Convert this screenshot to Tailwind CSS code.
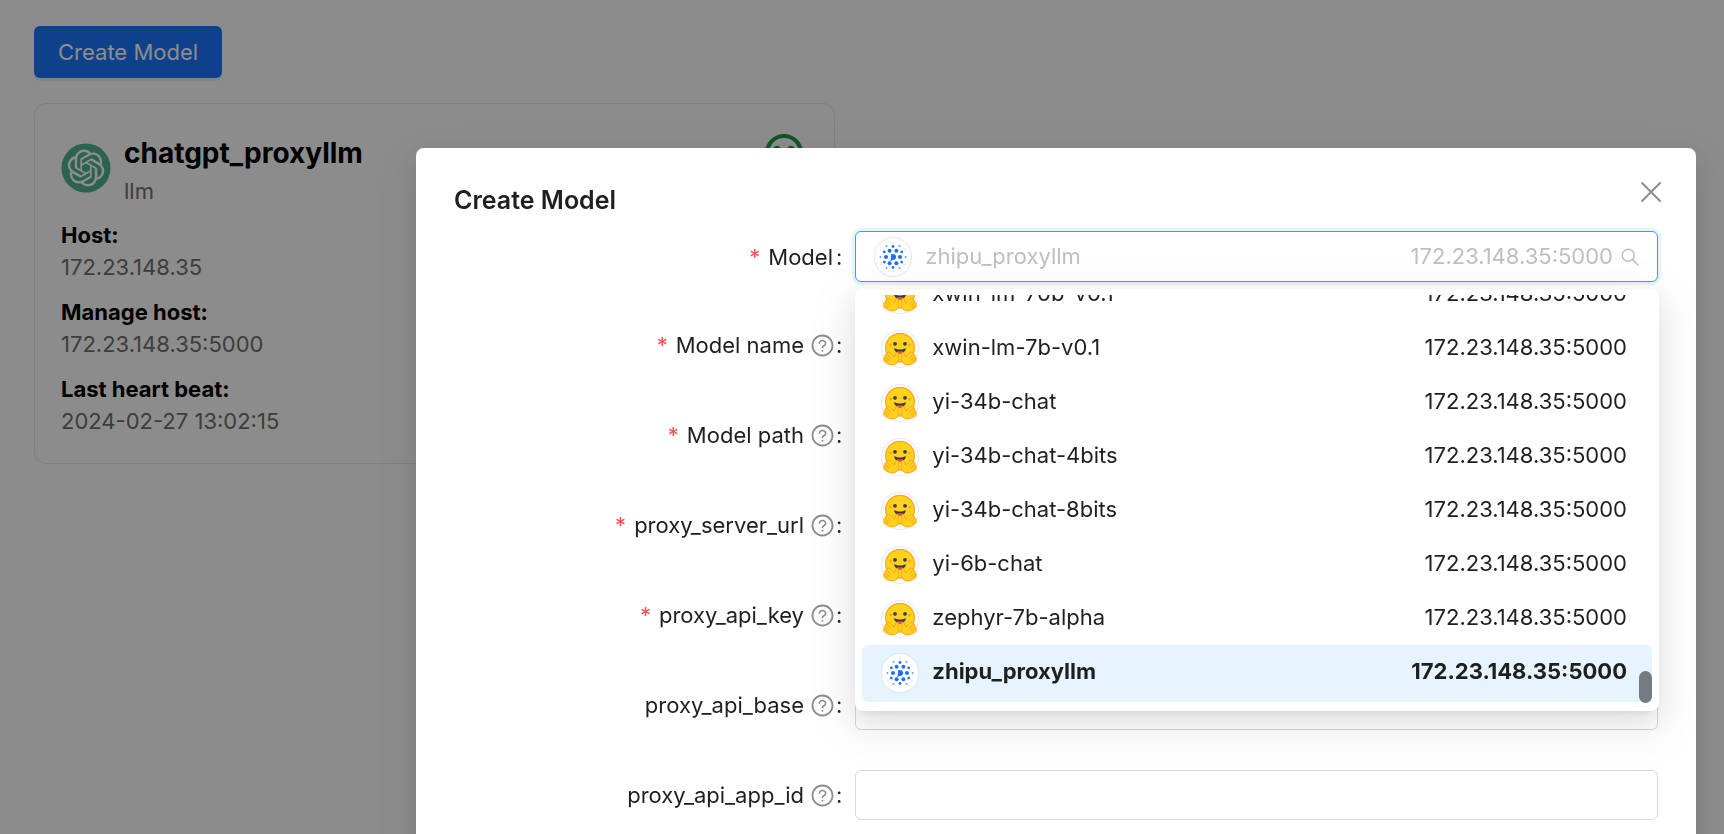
<!DOCTYPE html>
<html lang="en">
<head>
<meta charset="utf-8">
<meta name="viewport" content="width=device-width, initial-scale=1">
<title>Create Model</title>
<script src="https://cdn.jsdelivr.net/npm/@tailwindcss/browser@4"></script>
</head>
<body class="min-h-screen bg-white font-[Inter,'Liberation_Sans',sans-serif] text-[22px] leading-8 text-[#1f1f1f]">

<svg class="hidden" aria-hidden="true">
  <symbol id="hug" viewBox="0 0 36 36">
    <circle cx="18" cy="16.700" r="14.400" fill="#ffd21e" stroke="#ffa41b" stroke-width="1.200"/>
    <circle cx="8.400" cy="14" r="1.200" fill="#ffa41b"/><circle cx="27.600" cy="14" r="1.200" fill="#ffa41b"/>
    <circle cx="13" cy="12.800" r="1.900" fill="#3a3b45"/><circle cx="23" cy="12.800" r="1.900" fill="#3a3b45"/>
    <path d="M12.800 17.200c1.600.9 3.200 1.400 5.200 1.400s3.700-.5 5.200-1.400c.7 0 .6 1.200.2 2.100-.9 2-3 3.200-5.400 3.200s-4.500-1.200-5.400-3.200c-.4-.9-.5-2.100.2-2.100z" fill="#3a3b45"/>
    <path d="M14.300 21.200c.8-1.300 2.600-1.100 3.700-.6 1.100-.5 2.900-.7 3.700.6-1 .9-2.300 1.300-3.700 1.300s-2.700-.4-3.700-1.300z" fill="#ef4e4e"/>
    <g id="hand" fill="#ffd21e" stroke="#ffa41b" stroke-width="1" stroke-linejoin="round">
      <path d="M6.800 21.300c-1.200-.5-2.300.5-2 1.900-1.400-.2-2.300 1.100-1.700 2.400-1.200.1-1.700 1.500-1 2.500-.9.700-.7 2 .3 2.600 2.600 2 6.400 3.500 9.400 3 2.900-.4 4.600-2.500 4.700-5.100.1-1.400-.8-2.400-.3-4 .4-1.500.1-3-1-3.100-1.200-.1-1.900 1-2.200 2.500l-.6 1.800c-1.200-.4-2.200-1.300-3.100-2.500-.9-1.200-1.700-1.800-2.500-2z"/>
      <path d="M4.800 23.200l4.400 4.500M3.100 25.600l4.600 3.800M2.100 28.100l4.200 2.600" fill="none"/>
    </g>
    <use href="#hand" transform="matrix(-1 0 0 1 36 0)"/>
  </symbol>
  <symbol id="zhipu" viewBox="0 0 36 36">
    <g fill="#1f70ff">
      <path d="M16.200 15l3.200.3c2.400 1.200 2.400 4.200 0 5.400l-1.800.2-2.400 1.300.7-2.800z"/>
      <circle cx="14.600" cy="11.800" r="2"/><circle cx="21.400" cy="11.800" r="2"/>
      <circle cx="11" cy="18" r="2.100"/><circle cx="25" cy="18" r="2.100"/>
      <circle cx="14.600" cy="24.200" r="2"/><circle cx="21.400" cy="24.200" r="2"/>
      <circle cx="18" cy="7.500" r="1.400"/><circle cx="18" cy="28.500" r="1.400"/>
      <circle cx="9.300" cy="12.900" r="1.400"/><circle cx="26.700" cy="12.900" r="1.400"/>
      <circle cx="9.300" cy="23.100" r="1.400"/><circle cx="26.700" cy="23.100" r="1.400"/>
      <g opacity=".7"><circle cx="11.500" cy="7" r="1"/><circle cx="24.500" cy="7" r="1"/><circle cx="5.400" cy="18" r="1"/><circle cx="30.600" cy="18" r="1"/><circle cx="11.500" cy="29" r="1"/><circle cx="24.500" cy="29" r="1"/></g>
      <g opacity=".3"><circle cx="18" cy="3.800" r=".7"/><circle cx="18" cy="32.200" r=".7"/><circle cx="6" cy="10.800" r=".7"/><circle cx="30" cy="10.800" r=".7"/><circle cx="6" cy="25.200" r=".7"/><circle cx="30" cy="25.200" r=".7"/></g>
    </g>
  </symbol>
  <symbol id="help" viewBox="0 0 1024 1024">
    <path d="M512 64C264.600 64 64 264.600 64 512s200.600 448 448 448 448-200.600 448-448S759.400 64 512 64zm0 820c-205.400 0-372-166.600-372-372s166.600-372 372-372 372 166.600 372 372-166.600 372-372 372z"/>
    <path d="M623.600 316.700C593.600 290.400 554 276 512 276s-81.600 14.500-111.600 40.700C369.200 344 352 380.700 352 420v7.600c0 4.400 3.600 8 8 8h48c4.400 0 8-3.600 8-8V420c0-44.100 43.100-80 96-80s96 35.900 96 80c0 31.100-22 59.600-56.100 72.700-21.200 8.100-39.200 22.300-52.100 40.900-13.100 19-19.900 41.800-19.900 64.900V620c0 4.400 3.600 8 8 8h48c4.400 0 8-3.600 8-8v-22.700a48.300 48.300 0 0130.900-44.800c59-22.700 97.100-74.700 97.100-132.500.1-39.300-17.100-76-48.300-103.300zM472 732a40 40 0 1080 0 40 40 0 10-80 0z"/>
  </symbol>
</svg>

<main class="px-[34px] pt-[26px]">
  <button type="button" class="block h-[52px] rounded-md bg-[#1d76ff] px-6 text-white shadow-[0_3px_0_rgba(5,145,255,0.1)]">Create Model</button>

  <article class="mt-[25px] max-w-[801px] rounded-xl border border-gray-200 px-[26px] pt-[26px] pb-[26px] text-[#707070]">
    <header class="flex items-start">
      <svg class="mt-[13px] size-[50px] shrink-0" viewBox="0 0 50 50" role="img" aria-label="OpenAI">
        <circle cx="25" cy="25" r="24.500" fill="#51b292"/>
        <g transform="translate(6.600 6.600) scale(1.533)" fill="#fff">
          <path d="M22.282 9.821a5.985 5.985 0 0 0-.516-4.910 6.046 6.046 0 0 0-6.510-2.900A6.065 6.065 0 0 0 4.981 4.180a5.985 5.985 0 0 0-3.998 2.900 6.046 6.046 0 0 0 .743 7.097 5.980 5.980 0 0 0 .510 4.911 6.051 6.051 0 0 0 6.515 2.900A5.985 5.985 0 0 0 13.260 24a6.056 6.056 0 0 0 5.772-4.206 5.990 5.990 0 0 0 3.998-2.900 6.056 6.056 0 0 0-.748-7.073zM13.260 22.430a4.476 4.476 0 0 1-2.876-1.041l.142-.080 4.778-2.758a.795.795 0 0 0 .393-.681v-6.737l2.020 1.169a.071.071 0 0 1 .038.052v5.583a4.504 4.504 0 0 1-4.495 4.493zM3.600 18.304a4.471 4.471 0 0 1-.535-3.014l.142.085 4.783 2.759a.771.771 0 0 0 .780 0l5.843-3.369v2.332a.080.080 0 0 1-.033.062L9.740 19.950a4.500 4.500 0 0 1-6.140-1.646zM2.341 7.896a4.485 4.485 0 0 1 2.366-1.973V11.600a.766.766 0 0 0 .388.677l5.814 3.354-2.020 1.169a.076.076 0 0 1-.071 0l-4.830-2.787A4.504 4.504 0 0 1 2.341 7.872zm16.597 3.856l-5.833-3.388L15.119 7.200a.076.076 0 0 1 .071 0l4.830 2.791a4.494 4.494 0 0 1-.677 8.105v-5.678a.790.790 0 0 0-.405-.666zm2.010-3.024l-.142-.085-4.774-2.782a.776.776 0 0 0-.785 0L9.409 9.230V6.897a.066.066 0 0 1 .028-.062l4.830-2.787a4.499 4.499 0 0 1 6.681 4.660zM8.307 12.863l-2.020-1.164a.080.080 0 0 1-.038-.057V6.075a4.499 4.499 0 0 1 7.376-3.454l-.142.080-4.778 2.759a.795.795 0 0 0-.393.681zm1.097-2.365l2.602-1.500 2.607 1.500v2.999l-2.597 1.500-2.607-1.500z"/>
        </g>
      </svg>
      <div class="ml-[13px] flex-1">
        <h2 class="mt-px text-[28px] leading-[44px] font-bold text-black">chatgpt_proxyllm</h2>
        <p class="leading-8">llm</p>
      </div>
      <svg class="mr-[4px] mt-[3px] size-10" viewBox="0 0 40 40" fill="none" stroke="#1f9a46" stroke-width="4" role="img" aria-label="Healthy">
        <circle cx="20" cy="20" r="17"/><path d="M11 25q9 10 18 0"/><circle cx="13" cy="16" r="1.200"/><circle cx="27" cy="16" r="1.200"/>
      </svg>
    </header>
    <dl class="mt-3 grid gap-[13px]">
      <div><dt class="font-bold text-black">Host:</dt><dd>172.23.148.35</dd></div>
      <div><dt class="font-bold text-black">Manage host:</dt><dd>172.23.148.35:5000</dd></div>
      <div><dt class="font-bold text-black">Last heart beat:</dt><dd>2024-02-27 13:02:15</dd></div>
    </dl>
  </article>
</main>

<div class="fixed inset-0 flex justify-end overflow-hidden bg-black/45 pt-[148px] pr-7">
  <section role="dialog" aria-modal="true" aria-labelledby="title" class="min-h-full w-full max-w-[1280px] self-start rounded-lg bg-white px-[38px] pt-8 pb-10 shadow-[0_10px_26px_rgba(0,0,0,0.08),0_5px_10px_-6px_rgba(0,0,0,0.12),0_14px_45px_13px_rgba(0,0,0,0.05)]">
    <header class="flex h-10 items-center justify-between">
      <h1 id="title" class="text-[25px] leading-10 font-semibold">Create Model</h1>
      <button type="button" aria-label="Close" class="-mt-4 -mr-2 p-1">
        <svg class="size-[22px]" viewBox="0 0 22 22" fill="none" stroke="#8c8c8c" stroke-width="2" stroke-linecap="round"><path d="M2 2l18 18M20 2L2 20"/></svg>
      </button>
    </header>

    <form class="mt-[11px]">
      <div class="mb-[38px] grid grid-cols-3">
        <label for="model" class="flex items-center justify-end pr-[13px]"><span class="mr-2 text-[#ff4d4f]">*</span>Model<span class="ml-[3px]">:</span></label>
        <div class="relative col-span-2">
          <div class="flex h-[51px] items-center rounded-md border border-[#4096ff] bg-white px-[18px] text-[#bfbfbf] shadow-[0_0_0_3px_rgba(5,145,255,0.1)]">
            <span class="grid h-10 w-[38px] shrink-0 place-items-center rounded-full border border-gray-200 bg-white"><svg class="size-9"><use href="#zhipu"/></svg></span>
            <input id="model" type="text" role="combobox" aria-expanded="true" aria-controls="models" placeholder="zhipu_proxyllm" class="ml-[13px] h-full min-w-0 flex-1 bg-transparent pb-[2px] outline-none placeholder:text-[#bfbfbf]">
            <span class="pb-[2px]">172.23.148.35:5000</span>
            <svg class="ml-2 size-[18px]" viewBox="0 0 18 18" fill="none" stroke="currentColor" stroke-width="1.500" stroke-linecap="round"><circle cx="7.200" cy="7.200" r="6"/><path d="M11.600 11.600l5.400 5.400"/></svg>
          </div>

          <div class="absolute top-[58px] -right-px left-0 z-10 rounded-lg bg-white p-[7px] pt-[6px] shadow-[0_10px_26px_rgba(0,0,0,0.08),0_5px_10px_-6px_rgba(0,0,0,0.12),0_14px_45px_13px_rgba(0,0,0,0.05)]">
            <ul id="models" role="listbox" aria-label="Model" class="relative flex h-[409px] flex-col justify-end overflow-hidden pb-[2px]">
              <li role="option" class="flex h-[54px] shrink-0 items-center pr-[25px] pb-[2px] pl-[19px]"><span class="mt-[3px] mr-[13px] size-[38px] rounded-full border border-gray-200 bg-white"><svg class="size-9"><use href="#hug"/></svg></span><span class="flex-1">xwin-lm-70b-v0.1</span><span>172.23.148.35:5000</span></li>
              <li role="option" class="flex h-[54px] shrink-0 items-center pr-[25px] pb-[2px] pl-[19px]"><span class="mt-[3px] mr-[13px] size-[38px] rounded-full border border-gray-200 bg-white"><svg class="size-9"><use href="#hug"/></svg></span><span class="flex-1">xwin-lm-7b-v0.1</span><span>172.23.148.35:5000</span></li>
              <li role="option" class="flex h-[54px] shrink-0 items-center pr-[25px] pb-[2px] pl-[19px]"><span class="mt-[3px] mr-[13px] size-[38px] rounded-full border border-gray-200 bg-white"><svg class="size-9"><use href="#hug"/></svg></span><span class="flex-1">yi-34b-chat</span><span>172.23.148.35:5000</span></li>
              <li role="option" class="flex h-[54px] shrink-0 items-center pr-[25px] pb-[2px] pl-[19px]"><span class="mt-[3px] mr-[13px] size-[38px] rounded-full border border-gray-200 bg-white"><svg class="size-9"><use href="#hug"/></svg></span><span class="flex-1">yi-34b-chat-4bits</span><span>172.23.148.35:5000</span></li>
              <li role="option" class="flex h-[54px] shrink-0 items-center pr-[25px] pb-[2px] pl-[19px]"><span class="mt-[3px] mr-[13px] size-[38px] rounded-full border border-gray-200 bg-white"><svg class="size-9"><use href="#hug"/></svg></span><span class="flex-1">yi-34b-chat-8bits</span><span>172.23.148.35:5000</span></li>
              <li role="option" class="flex h-[54px] shrink-0 items-center pr-[25px] pb-[2px] pl-[19px]"><span class="mt-[3px] mr-[13px] size-[38px] rounded-full border border-gray-200 bg-white"><svg class="size-9"><use href="#hug"/></svg></span><span class="flex-1">yi-6b-chat</span><span>172.23.148.35:5000</span></li>
              <li role="option" class="flex h-[54px] shrink-0 items-center pr-[25px] pb-[2px] pl-[19px]"><span class="mt-[3px] mr-[13px] size-[38px] rounded-full border border-gray-200 bg-white"><svg class="size-9"><use href="#hug"/></svg></span><span class="flex-1">zephyr-7b-alpha</span><span>172.23.148.35:5000</span></li>
              <li role="option" aria-selected="true" class="flex h-[57px] shrink-0 items-start rounded-md bg-[#e6f4ff] pt-[10px] pr-[25px] pl-[19px] font-bold"><span class="-mt-[2px] mr-[13px] grid h-10 w-[38px] place-items-center rounded-full border border-gray-200 bg-white"><svg class="size-9"><use href="#zhipu"/></svg></span><span class="flex-1">zhipu_proxyllm</span><span>172.23.148.35:5000</span></li>
              <li role="presentation" class="absolute right-0 bottom-px h-8 w-[13px] rounded-full bg-[#757b82]"></li>
            </ul>
          </div>
        </div>
      </div>

      <div class="grid gap-10">
        <div class="grid grid-cols-3">
          <label for="name" class="flex items-center justify-end pr-[13px]"><span class="mr-2 text-[#ff4d4f]">*</span>Model name<svg class="ml-[6px] size-[25px] fill-[#8c8c8c]"><use href="#help"/></svg><span class="ml-px">:</span></label>
          <input id="name" type="text" class="col-span-2 h-[50px] rounded-md border border-[#d9d9d9] px-4">
        </div>
        <div class="grid grid-cols-3">
          <label for="path" class="flex items-center justify-end pr-[13px]"><span class="mr-2 text-[#ff4d4f]">*</span>Model path<svg class="ml-[6px] size-[25px] fill-[#8c8c8c]"><use href="#help"/></svg><span class="ml-px">:</span></label>
          <input id="path" type="text" class="col-span-2 h-[50px] rounded-md border border-[#d9d9d9] px-4">
        </div>
        <div class="grid grid-cols-3">
          <label for="url" class="flex items-center justify-end pr-[13px]"><span class="mr-2 text-[#ff4d4f]">*</span>proxy_server_url<svg class="ml-[6px] size-[25px] fill-[#8c8c8c]"><use href="#help"/></svg><span class="ml-px">:</span></label>
          <input id="url" type="text" class="col-span-2 h-[50px] rounded-md border border-[#d9d9d9] px-4">
        </div>
        <div class="grid grid-cols-3">
          <label for="key" class="flex items-center justify-end pr-[13px]"><span class="mr-2 text-[#ff4d4f]">*</span>proxy_api_key<svg class="ml-[6px] size-[25px] fill-[#8c8c8c]"><use href="#help"/></svg><span class="ml-px">:</span></label>
          <input id="key" type="text" class="col-span-2 h-[50px] rounded-md border border-[#d9d9d9] px-4">
        </div>
        <div class="grid grid-cols-3">
          <label for="base" class="flex items-center justify-end pr-[13px]">proxy_api_base<svg class="ml-[6px] size-[25px] fill-[#8c8c8c]"><use href="#help"/></svg><span class="ml-px">:</span></label>
          <input id="base" type="text" class="col-span-2 h-[50px] rounded-md border border-[#d9d9d9] px-4">
        </div>
        <div class="grid grid-cols-3">
          <label for="app" class="flex items-center justify-end pr-[13px]">proxy_api_app_id<svg class="ml-[6px] size-[25px] fill-[#8c8c8c]"><use href="#help"/></svg><span class="ml-px">:</span></label>
          <input id="app" type="text" class="col-span-2 h-[50px] rounded-md border border-[#d9d9d9] px-4">
        </div>
      </div>
    </form>
  </section>
</div>
</body>
</html>
